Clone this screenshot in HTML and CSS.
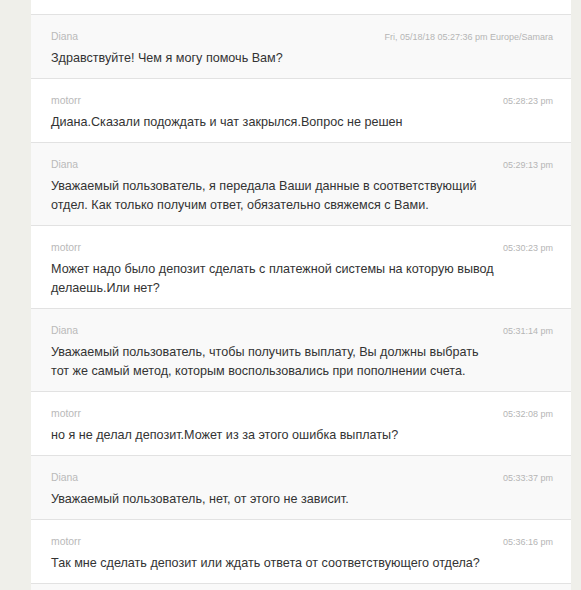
FILE: index.html
```html
<!DOCTYPE html>
<html lang="ru">
<head>
<meta charset="utf-8">
<link rel="stylesheet" href="styles.css">
</head>
<body>
<div class="chat">
  <div class="msg msg-cut"></div>
  <div class="msg msg-agent">
    <div class="msg-head"><span class="msg-name">Diana</span><span class="msg-time">Fri, 05/18/18 05:27:36 pm Europe/Samara</span></div>
    <div class="msg-text">Здравствуйте! Чем я могу помочь Вам?</div>
  </div>
  <div class="msg">
    <div class="msg-head"><span class="msg-name">motorr</span><span class="msg-time">05:28:23 pm</span></div>
    <div class="msg-text">Диана.Сказали подождать и чат закрылся.Вопрос не решен</div>
  </div>
  <div class="msg msg-agent">
    <div class="msg-head"><span class="msg-name">Diana</span><span class="msg-time">05:29:13 pm</span></div>
    <div class="msg-text">Уважаемый пользователь, я передала Ваши данные в соответствующий отдел. Как только получим ответ, обязательно свяжемся с Вами.</div>
  </div>
  <div class="msg">
    <div class="msg-head"><span class="msg-name">motorr</span><span class="msg-time">05:30:23 pm</span></div>
    <div class="msg-text">Может надо было депозит сделать с платежной системы на которую вывод делаешь.Или нет?</div>
  </div>
  <div class="msg msg-agent">
    <div class="msg-head"><span class="msg-name">Diana</span><span class="msg-time">05:31:14 pm</span></div>
    <div class="msg-text">Уважаемый пользователь, чтобы получить выплату, Вы должны выбрать тот же самый метод, которым воспользовались при пополнении счета.</div>
  </div>
  <div class="msg">
    <div class="msg-head"><span class="msg-name">motorr</span><span class="msg-time">05:32:08 pm</span></div>
    <div class="msg-text">но я не делал депозит.Может из за этого ошибка выплаты?</div>
  </div>
  <div class="msg msg-agent">
    <div class="msg-head"><span class="msg-name">Diana</span><span class="msg-time">05:33:37 pm</span></div>
    <div class="msg-text">Уважаемый пользователь, нет, от этого не зависит.</div>
  </div>
  <div class="msg">
    <div class="msg-head"><span class="msg-name">motorr</span><span class="msg-time">05:36:16 pm</span></div>
    <div class="msg-text">Так мне сделать депозит или ждать ответа от соответствующего отдела?</div>
  </div>
  <div class="msg msg-agent msg-tail"></div>
</div>
</body>
</html>
```

FILE: styles.css
```css
html, body {
  margin: 0;
  padding: 0;
  background: #efefea;
  height: 590px;
  overflow: hidden;
}
body {
  font-family: "Liberation Sans", Arial, sans-serif;
  padding-left: 31px;
}
.chat {
  width: 540px;
  background: #ffffff;
}
.msg {
  background: #ffffff;
  border-bottom: 1px solid #e2e2e2;
  padding: 15px 18px 10px 20px;
}
.msg-cut {
  height: 15px;
  padding: 0;
  box-sizing: border-box;
}
.msg-tail {
  height: 20px;
  padding: 0;
  border-bottom: 0;
}
.msg-agent {
  background: #f9f9f9;
}
.msg-head {
  display: flex;
  justify-content: space-between;
  align-items: baseline;
  height: 14px;
  line-height: 14px;
  margin-bottom: 5px;
}
.msg-name {
  font-size: 10.4px;
  color: #b9b9b9;
}
.msg-time {
  font-size: 9px;
  color: #b5b5b5;
}
.msg-text {
  font-size: 12.6px;
  line-height: 19px;
  color: #333333;
  max-width: 446px;
}
```
